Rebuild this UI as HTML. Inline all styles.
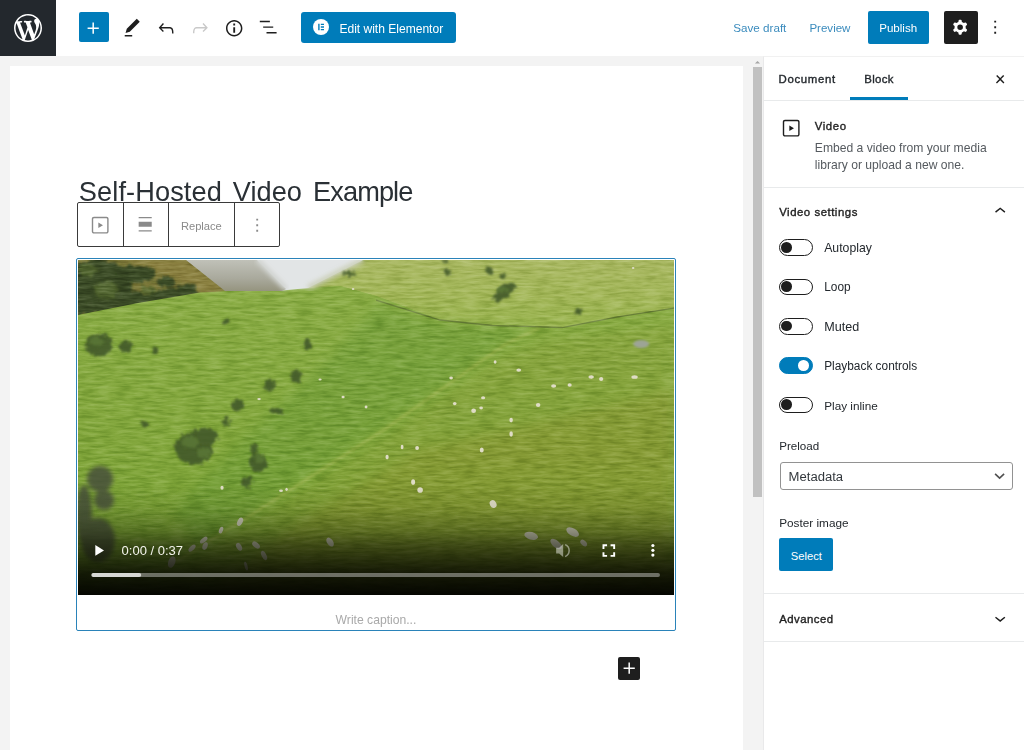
<!DOCTYPE html>
<html lang="en">
<head>
<meta charset="utf-8">
<title>Add New Post</title>
<style>
*{box-sizing:border-box;margin:0;padding:0}
html,body{width:1024px;height:750px;overflow:hidden;background:#f3f3f3;font-family:"Liberation Sans",sans-serif;font-size:13px;color:#1e1e1e}
.abs{position:absolute}
#app{position:relative;width:1024px;height:750px;overflow:hidden}
/* header */
#header{left:0;top:0;width:1024px;height:56px;background:#fff}
#wplogo{left:0;top:0;width:56px;height:56px;background:#23282d}
.btn-blue{background:#007cba;color:#fff;border-radius:2px}
.txt{white-space:nowrap;line-height:1}
/* canvas */
#canvas{left:10px;top:66px;width:733px;height:684px;background:#fff}
#scroll{left:743px;top:56px;width:20px;height:694px;background:#f3f3f3}
#thumb{left:753px;top:67px;width:9px;height:430px;background:#c1c1c1}
/* sidebar */
#sidebar{left:763px;top:56px;width:261px;height:694px;background:#fff;border-left:1px solid #e9e9ea;border-top:1px solid #f1f1f1}
.hr{height:1px;background:#e8eaeb;left:764px;width:260px}
.b{font-weight:bold}
.toggle{width:34px;height:16.8px;border:1.5px solid #1e1e1e;border-radius:9px;background:#fff}
.toggle i{position:absolute;left:1.5px;top:1.55px;width:10.7px;height:10.7px;border-radius:50%;background:#1e1e1e}
.toggle.on{background:#007cba;border-color:#007cba}
.toggle.on i{left:18.8px;top:1.55px;width:10.7px;height:10.7px;background:#fff}
.lbl{color:#2b2f33;font-size:13px}
</style>
</head>
<body>
<div id="app">
<!-- ===== HEADER ===== -->
<div id="header" class="abs"></div>
<div id="wplogo" class="abs">
<svg class="abs" style="left:14px;top:14px" width="28" height="28" viewBox="0 0 20 20"><path fill="#fff" d="M20 10c0-5.51-4.49-10-10-10C4.48 0 0 4.49 0 10c0 5.52 4.48 10 10 10 5.51 0 10-4.48 10-10zM7.78 15.37L4.37 6.22c.55-.02 1.17-.08 1.17-.08.5-.06.44-1.13-.06-1.11 0 0-1.45.11-2.37.11-.18 0-.37 0-.58-.01C4.12 2.69 6.87 1.11 10 1.11c2.33 0 4.45.87 6.05 2.34-.68-.11-1.65.39-1.65 1.58 0 .74.45 1.36.9 2.1.35.61.55 1.36.55 2.46 0 1.49-1.4 5-1.4 5l-3.03-8.37c.54-.02.82-.17.82-.17.5-.05.44-1.25-.06-1.22 0 0-1.44.12-2.38.12-.87 0-2.33-.12-2.33-.12-.5-.03-.56 1.2-.06 1.22l.92.08 1.26 3.41zM17.41 10c.24-.64.74-1.87.43-4.25.7 1.29 1.05 2.71 1.05 4.25 0 3.29-1.73 6.24-4.4 7.78.97-2.59 1.94-5.2 2.92-7.78zM6.1 18.09C3.12 16.65 1.11 13.53 1.11 10c0-1.3.23-2.48.72-3.59C3.25 10.3 4.67 14.2 6.1 18.09zm4.03-6.63l2.58 6.98c-.86.29-1.76.45-2.71.45-.79 0-1.57-.11-2.29-.33.81-2.38 1.62-4.74 2.42-7.1z"/></svg>
</div>
<!-- inserter -->
<div class="abs btn-blue" style="left:78.5px;top:12.3px;width:30px;height:30px"></div>
<svg class="abs" style="left:82.3px;top:16.5px" width="22.4" height="22.4" viewBox="0 0 24 24"><path fill="#fff" d="M18 11.2h-5.2V6h-1.600v5.200H6v1.600h5.200V18h1.600v-5.200H18z"/></svg>
<!-- tools -->
<svg class="abs" style="left:121.3px;top:16.6px" width="22.4" height="22.4" viewBox="0 0 24 24"><path fill="#1e1e1e" d="M20.1 5.100L16.900 2 6.200 12.700l-1.300 4.400 4.500-1.300L20.100 5.100zM4 20.800h8v-1.500H4v1.500z"/></svg>
<svg class="abs" style="left:155.2px;top:16.6px" width="22.4" height="22.4" viewBox="0 0 24 24"><path fill="#1e1e1e" d="M18.300 11.700c-.600-.600-1.400-.900-2.300-.900H6.700l2.900-3.300-1.100-1-4.500 5L8.500 16l1-1-2.700-2.700H16c.5 0 .9.200 1.300.5 1 1 1 3.400 1 4.500v.3h1.500v-.2c0-1.500 0-4.300-1.500-5.900z"/></svg>
<svg class="abs" style="left:189.1px;top:16.6px" width="22.4" height="22.4" viewBox="0 0 24 24"><path fill="#c9c9c9" d="M15.600 6.500l-1.100 1 2.900 3.300H8c-.9 0-1.700.3-2.300.9-1.400 1.500-1.400 4.200-1.400 5.600v.2h1.500v-.3c0-1.100 0-3.500 1-4.500.3-.3.700-.5 1.300-.5h9.200L14.500 15l1.100 1.100 4.600-4.600-4.600-5z"/></svg>
<svg class="abs" style="left:222.6px;top:16.5px" width="22.4" height="22.4" viewBox="0 0 24 24"><path fill="#1e1e1e" d="M12 3.200c-4.800 0-8.800 3.900-8.800 8.800 0 4.800 3.900 8.800 8.800 8.800 4.800 0 8.800-3.900 8.800-8.800 0-4.800-4-8.800-8.800-8.800zm0 16c-4 0-7.200-3.300-7.200-7.200C4.800 8 8 4.800 12 4.800s7.200 3.300 7.200 7.200c0 4-3.200 7.200-7.200 7.200zM11 17h2v-6h-2v6zm0-8h2V7h-2v2z"/></svg>
<svg class="abs" style="left:256.7px;top:16.4px" width="22.4" height="22.4" viewBox="0 0 24 24"><path fill="#1e1e1e" d="M13.800 5.200H3v1.500h10.800V5.200zm-3.600 12v1.500H21v-1.500H10.200zm7.200-6H6.600v1.500h10.800v-1.500z"/></svg>
<!-- elementor -->
<div class="abs btn-blue" style="left:300.7px;top:12px;width:155.2px;height:31px;border-radius:3px"></div>
<div class="abs" style="left:312.5px;top:19.3px;width:16px;height:16px;border-radius:50%;background:#fff"></div>
<svg class="abs" style="left:312.5px;top:19.3px" width="16" height="16" viewBox="0 0 16 16"><path fill="#007cba" d="M5.200 4.800h1.400v6.400H5.200zM7.800 4.800h3.200v1.300H7.800zM7.800 7.350h3.200v1.300H7.800zM7.800 9.900h3.200v1.300H7.800z"/></svg>
<!-- right -->
<div class="abs btn-blue" style="left:867.5px;top:11px;width:61.7px;height:33.4px"></div>
<div class="abs" style="left:944.1px;top:11px;width:34px;height:33.2px;background:#1e1e1e;border-radius:2px"></div>
<svg class="abs" style="left:949.2px;top:16.3px" width="22.4" height="22.4" viewBox="0 0 24 24"><path fill="#fff" fill-rule="evenodd" clip-rule="evenodd" d="M10.289 4.836A1 1 0 0111.275 4h1.306a1 1 0 01.987.836l.244 1.466c.787.26 1.503.679 2.108 1.218l1.393-.522a1 1 0 011.216.437l.653 1.130a1 1 0 01-.23 1.273l-1.148.944a6.025 6.025 0 010 2.435l1.149.946a1 1 0 01.23 1.272l-.653 1.130a1 1 0 01-1.216.437l-1.394-.522c-.605.540-1.320.958-2.108 1.218l-.244 1.466a1 1 0 01-.987.836h-1.306a1 1 0 01-.986-.836l-.244-1.466a5.995 5.995 0 01-2.108-1.218l-1.394.522a1 1 0 01-1.217-.436l-.653-1.131a1 1 0 01.23-1.272l1.149-.946a6.026 6.026 0 010-2.435l-1.148-.944a1 1 0 01-.23-1.272l.653-1.131a1 1 0 011.217-.437l1.393.522a5.994 5.994 0 012.108-1.218l.244-1.466zM14.929 12a3 3 0 11-6 0 3 3 0 016 0z"/></svg>
<svg class="abs" style="left:983.8px;top:16.3px" width="22.4" height="22.4" viewBox="0 0 24 24"><path fill="#1e1e1e" d="M13 19h-2v-2h2v2zm0-6h-2v-2h2v2zm0-6h-2V5h2v2z"/></svg>

<div class="abs txt" style="left:339.4px;top:22.00px;font-size:12.05px;line-height:14.00px;color:#fff;">Edit with Elementor</div>
<div class="abs txt" style="left:733.3px;top:21.00px;font-size:11.65px;line-height:13.00px;color:#3a8bbd;">Save draft</div>
<div class="abs txt" style="left:809.4px;top:22.00px;font-size:11.56px;line-height:12.00px;color:#3a8bbd;">Preview</div>
<div class="abs txt" style="left:879.2px;top:22.00px;font-size:11.59px;line-height:12.00px;color:#fff;">Publish</div>
<!-- ===== CANVAS ===== -->
<div id="canvas" class="abs"></div>
<div id="scroll" class="abs"></div>
<div id="thumb" class="abs"></div>
<svg class="abs" style="left:753px;top:59px" width="9" height="6" viewBox="0 0 9 6"><path fill="#a6a6a6" d="M4.500 1.900L7.100 4.600H1.900z"/></svg>
<div class="abs txt" style="left:78.8px;top:176.00px;font-size:27.20px;line-height:31.00px;color:#2a3035;letter-spacing:0.099px;">Self-Hosted</div>
<div class="abs txt" style="left:232.8px;top:176.00px;font-size:27.20px;line-height:31.00px;color:#2a3035;letter-spacing:0.030px;">Video</div>
<div class="abs txt" style="left:313.0px;top:176.00px;font-size:27.20px;line-height:31.00px;color:#2a3035;letter-spacing:-0.905px;">Example</div>
<!-- block toolbar -->
<div class="abs" style="left:76.9px;top:202.3px;width:203.2px;height:44.7px;border:1px solid #3a3a3a;border-radius:2px;background:#fff"></div>
<div class="abs" style="left:122.6px;top:202.3px;width:1px;height:44.7px;background:#3a3a3a"></div>
<div class="abs" style="left:167.7px;top:202.3px;width:1px;height:44.7px;background:#3a3a3a"></div>
<div class="abs" style="left:233.5px;top:202.3px;width:1px;height:44.7px;background:#3a3a3a"></div>
<svg class="abs" style="left:88.9px;top:214px" width="22.4" height="22.4" viewBox="0 0 24 24"><path fill="#8a8a8a" d="M18.700 3H5.300C4 3 3 4 3 5.300v13.400C3 20 4 21 5.300 21h13.400c1.300 0 2.300-1 2.300-2.300V5.300C21 4 20 3 18.700 3zm.8 15.700c0 .4-.4.800-.800.800H5.300c-.4 0-.8-.4-.8-.800V5.300c0-.4.400-.8.800-.8h13.400c.4 0 .8.400.8.800v13.400zM10 15l5-3-5-3v6z"/></svg>
<svg class="abs" style="left:134.1px;top:213.4px" width="22.4" height="22.4" viewBox="0 0 24 24"><path fill="#8a8a8a" d="M5 4.300h14v1.300H5zM5 18.400h14v1.300H5zM5 9.300h14v5.400H5z"/></svg>
<svg class="abs" style="left:245.6px;top:214px" width="22.4" height="22.4" viewBox="0 0 24 24"><path fill="#8a8a8a" d="M13 19h-2v-2h2v2zm0-6h-2v-2h2v2zm0-6h-2V5h2v2z"/></svg>
<!-- add block -->
<div class="abs" style="left:617.8px;top:657.2px;width:22.4px;height:22.6px;background:#1e1e1e;border-radius:2px"></div>
<svg class="abs" style="left:617.9px;top:657.3px" width="22.4" height="22.4" viewBox="0 0 24 24"><path fill="#fff" d="M18 11.200h-5.200V6h-1.600v5.200H6v1.600h5.200V18h1.600v-5.200H18z"/></svg>
<!-- ===== VIDEO BLOCK ===== -->
<div class="abs" style="left:76.2px;top:258.1px;width:599.8px;height:372.8px;border:1.800px solid #2a83b9;border-radius:2px;background:#fff"></div>
<svg class="abs" style="left:78px;top:259.900px" width="596.200" height="335.400" viewBox="0 0 596 335.300" preserveAspectRatio="none">
<defs>
<linearGradient id="gGrass" x1="0" y1="0" x2="0" y2="1"><stop offset="0" stop-color="#8aac45"/><stop offset=".5" stop-color="#82a63c"/><stop offset="1" stop-color="#749c30"/></linearGradient>
<linearGradient id="gFar" x1="0" y1="0" x2="0" y2="1"><stop offset="0" stop-color="#a9b862"/><stop offset=".55" stop-color="#a2b658"/><stop offset="1" stop-color="#98b34e"/></linearGradient>
<linearGradient id="gMist" x1="0" y1="0" x2="0" y2="1"><stop offset="0" stop-color="#c0c1b8"/><stop offset=".6" stop-color="#a9a99c"/><stop offset="1" stop-color="#95947f"/></linearGradient>
<linearGradient id="gShade" x1="0" y1="0" x2="0" y2="1"><stop offset="0" stop-color="#0c1000" stop-opacity="0"/><stop offset=".2" stop-color="#0c1000" stop-opacity=".08"/><stop offset=".4" stop-color="#0c1000" stop-opacity=".3"/><stop offset=".53" stop-color="#0a0c00" stop-opacity=".54"/><stop offset=".67" stop-color="#080a00" stop-opacity=".73"/><stop offset=".8" stop-color="#060700" stop-opacity=".88"/><stop offset="1" stop-color="#020200" stop-opacity=".98"/></linearGradient>
<filter id="grain" x="0" y="0" width="100%" height="100%" color-interpolation-filters="sRGB"><feTurbulence type="fractalNoise" baseFrequency="0.055 0.34" numOctaves="3" seed="11"/><feColorMatrix type="matrix" values="1.600 0 0 0 -0.300  1.600 0 0 0 -0.300  1.600 0 0 0 -0.300  0 0 0 0 1"/></filter>
<filter id="rough" x="-10%" y="-10%" width="120%" height="120%"><feTurbulence type="fractalNoise" baseFrequency="0.25" numOctaves="3" seed="3" result="t"/><feDisplacementMap in="SourceGraphic" in2="t" scale="8" xChannelSelector="R" yChannelSelector="G"/><feGaussianBlur stdDeviation="1.300"/></filter>
<filter id="b2"><feGaussianBlur stdDeviation="2"/></filter>
<filter id="b1"><feGaussianBlur stdDeviation="1"/></filter>
<filter id="b5"><feGaussianBlur stdDeviation="6"/></filter>
</defs>
<rect width="596" height="336" fill="url(#gGrass)"/>
<!-- left olive hill -->
<path d="M0 0H109L148 30.500L122 33L60 44L0 56z" fill="#7b783a"/>
<path d="M40 0H109L148 30.500L122 33L100 20L70 8z" fill="#8a803f" filter="url(#b2)"/>
<g filter="url(#rough)" fill="#3a4b25"><ellipse cx="20" cy="26" rx="34" ry="27"/><ellipse cx="58" cy="14" rx="20" ry="9"/><ellipse cx="52" cy="38" rx="16" ry="7"/><path d="M0 50L60 40L118 29" fill="none" stroke="#3a4b25" stroke-width="11"/><ellipse cx="88" cy="22" rx="9" ry="5"/></g>
<g filter="url(#rough)" fill="#566a30" opacity=".8"><ellipse cx="28" cy="30" rx="12" ry="9"/><ellipse cx="10" cy="10" rx="10" ry="6"/><ellipse cx="70" cy="30" rx="8" ry="4"/></g>
<!-- far right field -->
<path d="M285 0H596V48L539.500 56.800L484 67.500L414 65.500L362 60L298 36L262 26L230 28z" fill="url(#gFar)"/>
<!-- foreground hill -->
<path d="M0 55L60 43L122 32.600L204 30.500L262 26L298 36L362 60L414 65.500L484 67.500L539.500 56.800L596 48V336H0z" fill="url(#gGrass)"/>
<!-- darker zone left of diagonal ridge -->
<path d="M300 44L362 63L414 68L461 68L426 84L307 168L209 231L157 264L120 285L95 250L170 175L250 100z" fill="#5a9030" opacity=".27" filter="url(#b5)"/>
<!-- olive tint right of ridge -->
<path d="M470 80L596 64V336H60L157 272L209 240L307 178L426 96z" fill="#8f9030" opacity=".16" filter="url(#b5)"/>
<path d="M340 190L596 130V336H130L220 262z" fill="#8f8a2c" opacity=".26" filter="url(#b5)"/>
<!-- ridge highlight -->
<path d="M461 68L426 85L307 169L209 232L157 265L87 309" fill="none" stroke="#a3b552" stroke-width="3" opacity=".55" filter="url(#b1)"/>
<!-- fence line -->
<path d="M298 40L330 50L362 60L414 65.500L484 67.500L539.500 56.800L596 48" fill="none" stroke="#5d6f35" stroke-width="1.300" opacity=".7"/>
<!-- grass texture -->
<rect width="596" height="336" filter="url(#grain)" style="mix-blend-mode:soft-light" opacity=".34"/>
<!-- sky -->
<path d="M109 0L148 30.500L204 30.500L230 28L285 0z" fill="#e3e6e6"/>
<path d="M108 0H179L208 29L204 31L147 31z" fill="url(#gMist)"/>
<path d="M179 0L208 29L230 28L285 0z" fill="#e2e5e6" filter="url(#b1)"/>
<path d="M179 0L208 29" stroke="#cfd1cd" stroke-width="5" fill="none" filter="url(#b2)"/>
<path d="M230 28L285 0" stroke="#c9ceb4" stroke-width="6" fill="none" filter="url(#b2)" opacity=".8"/>
<!-- controls shade -->
<!-- bushes -->
<g filter="url(#rough)" fill="#405629" opacity=".88">
<ellipse cx="116" cy="188" rx="18.92" ry="16.34"/><ellipse cx="128" cy="176" rx="12.04" ry="8.60"/>
<ellipse cx="180" cy="203" rx="9.46" ry="8.60"/><ellipse cx="176" cy="190" rx="4.30" ry="6.02"/>
<ellipse cx="169" cy="222" rx="6.02" ry="6.02"/>
<ellipse cx="21" cy="85" rx="13.76" ry="11.18"/><ellipse cx="48" cy="87" rx="6.88" ry="6.02"/><ellipse cx="77" cy="90" rx="3.01" ry="3.87"/>
<ellipse cx="229" cy="84" rx="4.73" ry="5.59"/><ellipse cx="218" cy="116" rx="5.16" ry="7.31"/><ellipse cx="191" cy="125" rx="5.59" ry="6.45"/>
<ellipse cx="160" cy="145" rx="5.59" ry="6.45"/><ellipse cx="148" cy="62" rx="3.01" ry="3.44"/><ellipse cx="198" cy="151" rx="6.88" ry="3.01"/>
<ellipse cx="148" cy="161" rx="3.44" ry="5.16"/><ellipse cx="67" cy="164" rx="3.44" ry="3.44"/>
<ellipse cx="426" cy="32" rx="12.90" ry="6.02" transform="rotate(-38 426 32)"/>
<ellipse cx="369" cy="11.500" rx="3.87" ry="3.01"/><ellipse cx="411" cy="10.500" rx="3.87" ry="3.87"/><ellipse cx="425" cy="16" rx="2.15" ry="3.01"/><ellipse cx="500" cy="51.500" rx="3.01" ry="3.01"/>
<ellipse cx="272" cy="13.500" rx="6.88" ry="2.58"/><ellipse cx="367" cy="1" rx="2.58" ry="2.15"/>
</g>
<g filter="url(#rough)" fill="#5d7a38" opacity=".75"><ellipse cx="112" cy="182" rx="9" ry="6"/><ellipse cx="126" cy="193" rx="7" ry="5"/><ellipse cx="181" cy="199" rx="5" ry="4"/><ellipse cx="18" cy="82" rx="7" ry="5"/><ellipse cx="424" cy="30" rx="6" ry="3"/></g>
<g filter="url(#b2)" fill="#46503a" opacity=".85">
<ellipse cx="22" cy="219" rx="13" ry="13"/><ellipse cx="26" cy="240" rx="10" ry="10"/><ellipse cx="20" cy="280" rx="17" ry="22"/><ellipse cx="6" cy="255" rx="8" ry="30"/>
</g>
<!-- rock -->
<ellipse cx="563" cy="84" rx="8" ry="4" fill="#9da496" filter="url(#b1)"/>
<!-- sheep -->
<g fill="#dfdcc6">
<ellipse cx="417" cy="102" rx="1.44" ry="1.76"/><ellipse cx="440.600" cy="110" rx="2.40" ry="1.60"/><ellipse cx="373" cy="118" rx="1.84" ry="1.44"/>
<ellipse cx="475.500" cy="126" rx="2.56" ry="1.76"/><ellipse cx="491.500" cy="125" rx="2.08" ry="1.76"/><ellipse cx="513" cy="117" rx="2.80" ry="1.76"/>
<ellipse cx="523" cy="119" rx="2.08" ry="2.08"/><ellipse cx="556.400" cy="117" rx="3.20" ry="1.84"/><ellipse cx="405" cy="137.700" rx="2.08" ry="1.60"/>
<ellipse cx="376.600" cy="143.500" rx="1.84" ry="1.60"/><ellipse cx="395.500" cy="150.800" rx="2.40" ry="2.24"/><ellipse cx="403" cy="148" rx="1.84" ry="1.44"/>
<ellipse cx="460" cy="145" rx="2.24" ry="2.00"/><ellipse cx="433" cy="160" rx="1.76" ry="2.40"/><ellipse cx="433" cy="174" rx="1.76" ry="2.80"/>
<ellipse cx="309" cy="197" rx="1.60" ry="2.40"/><ellipse cx="324" cy="187" rx="1.44" ry="2.24"/><ellipse cx="339" cy="188" rx="1.92" ry="2.00"/>
<ellipse cx="403.600" cy="190" rx="2.00" ry="2.56"/><ellipse cx="335" cy="222" rx="2.00" ry="2.80"/><ellipse cx="342" cy="230" rx="2.80" ry="2.80"/>
<ellipse cx="415" cy="244" rx="3.20" ry="4.00" transform="rotate(-30 415 244)"/>
<ellipse cx="144" cy="227.700" rx="1.60" ry="1.92"/><ellipse cx="203" cy="230.600" rx="1.92" ry="1.28"/><ellipse cx="208.500" cy="229.300" rx="1.20" ry="1.60"/>
<ellipse cx="242" cy="119.500" rx="1.60" ry="1.04"/><ellipse cx="181" cy="139" rx="1.76" ry="1.12"/><ellipse cx="265" cy="137" rx="1.60" ry="1.20"/><ellipse cx="288" cy="147" rx="1.44" ry="1.44"/>
<ellipse cx="555" cy="8" rx="1.28" ry="1.04"/><ellipse cx="275" cy="29" rx="1.28" ry="0.96"/>
</g>
<g fill="#c9c8b6">
<ellipse cx="162" cy="261.700" rx="2.600" ry="4.500" transform="rotate(25 162 261.700)"/><ellipse cx="143" cy="270" rx="2" ry="3.500" transform="rotate(20 143 270)"/>
<ellipse cx="125.700" cy="280" rx="2.200" ry="4.500" transform="rotate(50 125.700 280)"/><ellipse cx="127" cy="286" rx="2.500" ry="4" transform="rotate(20 127 286)"/>
<ellipse cx="114" cy="288" rx="2.200" ry="4.500" transform="rotate(45 114 288)"/><ellipse cx="161" cy="286.700" rx="2.600" ry="4.200" transform="rotate(-30 161 286.700)"/>
<ellipse cx="178" cy="285" rx="2.600" ry="4.500" transform="rotate(-50 178 285)"/><ellipse cx="186" cy="295.500" rx="2.400" ry="5" transform="rotate(-25 186 295.500)"/>
<ellipse cx="252" cy="282" rx="3" ry="5" transform="rotate(-35 252 282)"/><ellipse cx="93.700" cy="302" rx="3.500" ry="6" transform="rotate(20 93.700 302)"/>
<ellipse cx="168" cy="306" rx="1.500" ry="4.500" transform="rotate(-15 168 306)"/>
<ellipse cx="453" cy="275.700" rx="7" ry="3.800" transform="rotate(15 453 275.700)"/><ellipse cx="494.500" cy="272" rx="7" ry="3.800" transform="rotate(30 494.500 272)"/>
<ellipse cx="478" cy="284" rx="7" ry="3.500" transform="rotate(40 478 284)"/><ellipse cx="505.500" cy="283" rx="4" ry="2.500" transform="rotate(45 505.500 283)"/>
</g>
<rect y="225" width="596" height="111" fill="url(#gShade)"/>
<!-- controls -->
<path d="M17.300 285L26 290.300L17.300 295.700z" fill="#fff"/>
<rect x="13.400" y="312.800" width="568.400" height="4" rx="2" fill="#fff" fill-opacity=".38"/>
<rect x="13.400" y="312.800" width="49.800" height="4" rx="2" fill="#fff" fill-opacity=".72"/>
<g fill="none" stroke="#fff" stroke-width="1.900"><path d="M525.300 288.800V285.200H528.900M532.400 285.200H536V288.800M536 292.200V295.800H532.400M528.900 295.800H525.300V292.200"/></g>
<g fill="#fff"><circle cx="574.700" cy="285.400" r="1.600"/><circle cx="574.700" cy="290.200" r="1.600"/><circle cx="574.700" cy="295" r="1.600"/></g>
<g opacity=".45"><path d="M478 287.700H481L485 284V297L481 293.300H478z" fill="#fff"/><path d="M487 284.500A6.500 6.500 0 0 1 487 296.500" fill="none" stroke="#fff" stroke-width="1.500"/></g>
</svg>
<div class="abs txt" style="left:180.9px;top:220.00px;font-size:11.17px;line-height:12.00px;color:#8a8a8a;">Replace</div>
<div class="abs txt" style="left:335.6px;top:613.00px;font-size:12.15px;line-height:14.00px;color:#a9a9a9;">Write caption...</div>
<div class="abs txt" style="left:121.6px;top:543.00px;font-size:12.99px;line-height:15.00px;color:#f4f4ec;">0:00 / 0:37</div>
<div id="sidebar" class="abs"></div>
<div class="abs txt" style="left:778.5px;top:73.00px;font-size:11.40px;line-height:12.00px;color:#23282d;letter-spacing:0.663px;-webkit-text-stroke:0.36px #23282d;">Document</div>
<div class="abs txt" style="left:864.3px;top:73.00px;font-size:11.40px;line-height:12.00px;color:#23282d;letter-spacing:0.331px;-webkit-text-stroke:0.36px #23282d;">Block</div>
<div class="abs" style="left:849.8px;top:96.8px;width:58.2px;height:3.7px;background:#007cba"></div>
<div class="abs hr" style="top:100.4px"></div>
<svg class="abs" style="left:989px;top:67.7px" width="22.4" height="22.4" viewBox="0 0 24 24"><path fill="#1e1e1e" d="M13 11.900l3.300-3.400-1.100-1-3.200 3.300-3.200-3.300-1.100 1 3.300 3.400-3.500 3.600 1 1L12 13l3.500 3.500 1-1z"/></svg>
<svg class="abs" style="left:779.8px;top:116.9px" width="22.4" height="22.4" viewBox="0 0 24 24"><path fill="#1e1e1e" d="M18.700 3H5.300C4 3 3 4 3 5.300v13.400C3 20 4 21 5.300 21h13.400c1.300 0 2.300-1 2.300-2.300V5.300C21 4 20 3 18.700 3zm.8 15.700c0 .4-.4.800-.800.800H5.300c-.4 0-.8-.4-.8-.800V5.300c0-.4.400-.8.800-.8h13.400c.4 0 .8.400.8.800v13.400zM10 15l5-3-5-3v6z"/></svg>
<div class="abs txt" style="left:814.8px;top:120.00px;font-size:11.40px;line-height:12.00px;color:#1e1e1e;letter-spacing:0.562px;-webkit-text-stroke:0.36px #1e1e1e;">Video</div>
<div class="abs txt" style="left:814.8px;top:141.00px;font-size:12.14px;line-height:14.00px;color:#555a5f;">Embed a video from your media</div>
<div class="abs txt" style="left:814.8px;top:158.00px;font-size:12.14px;line-height:14.00px;color:#555a5f;">library or upload a new one.</div>
<div class="abs hr" style="top:187px"></div>
<div class="abs txt" style="left:779.2px;top:206.00px;font-size:11.40px;line-height:12.00px;color:#1e1e1e;letter-spacing:0.522px;-webkit-text-stroke:0.36px #1e1e1e;">Video settings</div>
<svg class="abs" style="left:989.1px;top:200.3px" width="22.4" height="22.4" viewBox="0 0 24 24"><path fill="#1e1e1e" d="M6.500 12.400L12 8l5.500 4.400-.9 1.200L12 10l-4.500 3.600-1-1.200z"/></svg>
<div class="abs toggle" style="left:778.6px;top:239.3px"><i></i></div>
<div class="abs txt" style="left:824.2px;top:241.00px;font-size:12.26px;line-height:14.00px;color:#23282d;">Autoplay</div>
<div class="abs toggle" style="left:778.6px;top:278.6px"><i></i></div>
<div class="abs txt" style="left:824.2px;top:280.00px;font-size:11.87px;line-height:14.00px;color:#23282d;">Loop</div>
<div class="abs toggle" style="left:778.6px;top:318.0px"><i></i></div>
<div class="abs txt" style="left:824.2px;top:320.00px;font-size:12.59px;line-height:14.00px;color:#23282d;">Muted</div>
<div class="abs toggle on" style="left:778.6px;top:357.3px"><i></i></div>
<div class="abs txt" style="left:824.2px;top:359.00px;font-size:11.87px;line-height:14.00px;color:#23282d;">Playback controls</div>
<div class="abs toggle" style="left:778.6px;top:396.7px"><i></i></div>
<div class="abs txt" style="left:824.2px;top:399.00px;font-size:11.76px;line-height:13.00px;color:#23282d;">Play inline</div>
<div class="abs txt" style="left:779.2px;top:439.00px;font-size:11.60px;line-height:13.00px;color:#23282d;">Preload</div>
<div class="abs" style="left:780px;top:461.7px;width:232.5px;height:28px;border:1px solid #929292;border-radius:3px;background:#fff"></div>
<div class="abs txt" style="left:788.6px;top:469.00px;font-size:13.09px;line-height:15.00px;color:#32373c;">Metadata</div>
<svg class="abs" style="left:993px;top:472px" width="13" height="9" viewBox="0 0 13 9"><path fill="none" stroke="#505050" stroke-width="1.600" d="M2.100 1.900L6.600 6.200L11.100 1.900"/></svg>
<div class="abs txt" style="left:779.2px;top:516.00px;font-size:11.78px;line-height:13.00px;color:#23282d;">Poster image</div>
<div class="abs btn-blue" style="left:779.2px;top:537.7px;width:54px;height:33.5px"></div>
<div class="abs txt" style="left:790.7px;top:550.00px;font-size:11.23px;line-height:12.00px;color:#fff;">Select</div>
<div class="abs hr" style="top:593.2px"></div>
<div class="abs txt" style="left:779.2px;top:613.00px;font-size:11.40px;line-height:12.00px;color:#1e1e1e;letter-spacing:0.471px;-webkit-text-stroke:0.36px #1e1e1e;">Advanced</div>
<svg class="abs" style="left:989.1px;top:607.4px" width="22.4" height="22.4" viewBox="0 0 24 24"><path fill="#1e1e1e" d="M17.500 11.600L12 16l-5.500-4.400.9-1.200L12 14l4.500-3.600 1 1.200z"/></svg>
<div class="abs hr" style="top:640.6px"></div>
</div>
</body>
</html>
